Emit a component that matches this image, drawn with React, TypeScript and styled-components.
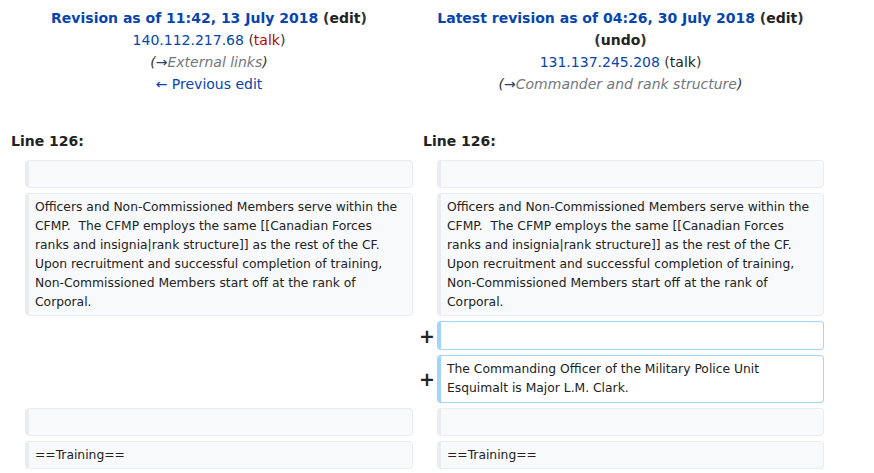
import React from "react";
import styled, { createGlobalStyle } from "styled-components";

const Global = createGlobalStyle`
  html, body { margin: 0; padding: 0; background: #fff; }
  body { font-family: "DejaVu Sans", sans-serif; color: #222; font-size: 14px; }
`;

const Diff = styled.div`
  display: grid;
  grid-template-columns: 16px 388px 16px 387px;
  column-gap: 4px;
  row-gap: 5px;
  margin-left: 5px;
  padding-top: 7px;
`;

const Title = styled.div`
  grid-column: span 2;
  text-align: center;
  line-height: 22px;
  font-size: 14px;
`;

const TitleLine = styled.div<{ $bold?: boolean }>`
  font-weight: ${(p) => (p.$bold ? "bold" : "normal")};
`;

const Link = styled.a<{ $tone?: "blue" | "red" | "dark" }>`
  color: ${(p) => (p.$tone === "red" ? "#ba0000" : p.$tone === "dark" ? "#222" : "#0645ad")};
  text-decoration: none;
`;

const Dark = styled.span`
  color: #333;
`;

const Comment = styled.span`
  font-style: italic;
  color: #72777d;
`;

const Arrow = styled.a`
  color: #2a3f66;
  text-decoration: none;
`;

const LineNo = styled.div`
  grid-column: span 2;
  font-weight: bold;
  line-height: 22px;
  padding: 0 6px 3px;
  margin-top: 30px;
`;

const Marker = styled.div`
  text-align: right;
  font-weight: bold;
  font-size: 19px;
  line-height: 22px;
  color: #222;
  align-self: center;
  margin-right: -2px;
`;

const Empty = styled.div`
  grid-column: span 2;
`;

const Cell = styled.div<{ $added?: boolean }>`
  font-size: 12.32px;
  line-height: 19px;
  white-space: pre-wrap;
  padding: ${(p) => (p.$added ? "4px 6px" : "3.5px 6px")};
  min-height: 19px;
  border-style: solid;
  border-width: 1px 1px 1px 4px;
  border-radius: 4px;
  background: ${(p) => (p.$added ? "#fff" : "#f8f9fa")};
  border-color: ${(p) => (p.$added ? "#a3d3ff" : "#eaecf0")};
  color: #222;
`;

const para =
  "Officers and Non-Commissioned Members serve within the CFMP.  The CFMP employs the same [[Canadian Forces ranks and insignia|rank structure]] as the rest of the CF. Upon recruitment and successful completion of training, Non-Commissioned Members start off at the rank of Corporal.";

export default function App() {
  return (
    <>
      <Global />
      <Diff>
        <Title>
          <TitleLine $bold>
            <Link href="#">Revision as of 11:42, 13 July 2018</Link>{" "}
            <Dark>
              (<Link $tone="dark" href="#">edit</Link>)
            </Dark>
          </TitleLine>
          <TitleLine>
            <Link href="#">140.112.217.68</Link> <Dark>(</Dark>
            <Link $tone="red" href="#">talk</Link>
            <Dark>)</Dark>
          </TitleLine>
          <TitleLine>
            <Comment>
              <Dark>(</Dark>
              <Arrow href="#">→</Arrow>External links<Dark>)</Dark>
            </Comment>
          </TitleLine>
          <TitleLine>
            <Link href="#">← Previous edit</Link>
          </TitleLine>
        </Title>
        <Title>
          <TitleLine $bold>
            <Link href="#">Latest revision as of 04:26, 30 July 2018</Link>{" "}
            <Dark>
              (<Link $tone="dark" href="#">edit</Link>)
            </Dark>
          </TitleLine>
          <TitleLine $bold>
            <Dark>
              (<Link $tone="dark" href="#">undo</Link>)
            </Dark>
          </TitleLine>
          <TitleLine>
            <Link href="#">131.137.245.208</Link>{" "}
            <Dark>
              (<Link $tone="dark" href="#">talk</Link>)
            </Dark>
          </TitleLine>
          <TitleLine>
            <Comment>
              <Dark>(</Dark>
              <Arrow href="#">→</Arrow>Commander and rank structure<Dark>)</Dark>
            </Comment>
          </TitleLine>
        </Title>

        <LineNo>Line 126:</LineNo>
        <LineNo>Line 126:</LineNo>

        <Marker />
        <Cell>{""}</Cell>
        <Marker />
        <Cell>{""}</Cell>

        <Marker />
        <Cell>{para}</Cell>
        <Marker />
        <Cell>{para}</Cell>

        <Empty />
        <Marker>+</Marker>
        <Cell $added>{""}</Cell>

        <Empty />
        <Marker>+</Marker>
        <Cell $added>The Commanding Officer of the Military Police Unit Esquimalt is Major L.M. Clark.</Cell>

        <Marker />
        <Cell>{""}</Cell>
        <Marker />
        <Cell>{""}</Cell>

        <Marker />
        <Cell>==Training==</Cell>
        <Marker />
        <Cell>==Training==</Cell>
      </Diff>
    </>
  );
}
